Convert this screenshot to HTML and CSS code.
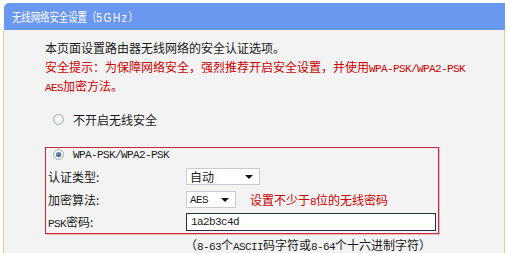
FILE: index.html
```html
<!DOCTYPE html>
<html lang="zh-CN">
<head>
<meta charset="utf-8">
<title>无线网络安全设置</title>
<link rel="stylesheet" href="styles.css">
</head>
<body>
<div class="wrap">
  <div class="head"><span class="head-text">无线网络安全设置（<span class="ghz">5GHz</span>）</span></div>
  <div class="panel">
    <div class="intro">
      <p>本页面设置路由器无线网络的安全认证选项。</p>
      <p class="red">安全提示：为保障网络安全，强烈推荐开启安全设置，并使用<span class="en">WPA-PSK/WPA2-PSK</span></p>
      <p class="red"><span class="en">AES</span>加密方法。</p>
    </div>
    <div class="radio-row off">
      <span class="radio"></span><span class="rlabel">不开启无线安全</span>
    </div>
    <div class="box">
      <div class="radio-row top">
        <span class="radio on"></span><span class="rlabel en">WPA-PSK/WPA2-PSK</span>
      </div>
      <div class="row r1">
        <span class="label">认证类型:</span>
        <span class="select s1"><span class="val">自动</span><span class="arrow"></span></span>
      </div>
      <div class="row r2">
        <span class="label">加密算法:</span>
        <span class="select s2"><span class="val en">AES</span><span class="arrow"></span></span>
        <span class="hint">设置不少于<span class="en">8</span>位的无线密码</span>
      </div>
      <div class="row r3">
        <span class="label"><span class="en">PSK</span>密码:</span>
        <span class="input"><span class="en">1a2b3c4d</span></span>
      </div>
    </div>
    <div class="note">（<span class="en">8-63</span>个<span class="en">ASCII</span>码字符或<span class="en">8-64</span>个十六进制字符）</div>
  </div>
</div>
</body>
</html>
```
FILE: styles.css
```css
html, body {
  margin: 0;
  padding: 0;
  background: #ffffff;
}
body {
  font-family: "Noto Sans CJK SC", "Noto Sans", sans-serif;
  font-size: 12px;
  color: #1a1a1a;
  width: 509px;
  height: 253px;
  overflow: hidden;
}
.en {
  font-family: "Liberation Mono", "DejaVu Sans Mono", monospace;
  font-size: 11px;
  letter-spacing: -0.6px;
}
.wrap {
  margin: 3px 4px 0 3px;
}
.head {
  height: 27px;
  background: #6a97f0;
  border-radius: 5px 0 0 0;
  color: #ffffff;
  display: flex;
  align-items: center;
  padding-left: 8px;
  margin-left: 1px;
}
.head-text {
  display: inline-block;
  font-size: 12px;
  transform: scaleX(0.78);
  transform-origin: left center;
  white-space: nowrap;
}
.ghz {
  font-family: "Liberation Sans", sans-serif;
  font-size: 13px;
  letter-spacing: 2px;
}
.panel {
  background: #f3f3f3;
  border-left: 1px solid #f6c987;
  border-right: 1px solid #f6c987;
  height: 223px;
  padding: 8px 0 0 41px;
  box-sizing: border-box;
}
.intro p {
  margin: 0;
  line-height: 19px;
  height: 19px;
  white-space: nowrap;
}
.red {
  color: #cc0000;
}
.radio-row {
  display: flex;
  align-items: center;
  height: 13px;
}
.radio-row.off {
  margin-top: 18px;
  margin-left: 8px;
}
.radio-row.top {
  margin-left: 7px;
}
.radio {
  width: 11px;
  height: 11px;
  border-radius: 50%;
  border: 1px solid #a9adb3;
  background: radial-gradient(circle at 50% 40%, #ffffff 0%, #eceff2 55%, #d5d9de 100%);
  box-sizing: border-box;
  flex: none;
  position: relative;
}
.radio.on::after {
  content: "";
  position: absolute;
  left: 2px;
  top: 2px;
  width: 5px;
  height: 5px;
  border-radius: 50%;
  background: radial-gradient(circle at 40% 35%, #7f9fc4 0%, #2c4f7d 70%, #1d3457 100%);
}
.rlabel {
  margin-left: 9px;
  white-space: nowrap;
}
.box {
  margin-top: 21px;
  width: 394px;
  height: 87px;
  border: 1px solid #c4283c;
  box-shadow: 1px 1px 0 #f2b8c2;
  box-sizing: border-box;
  margin-left: 0;
}
.row {
  display: flex;
  align-items: center;
  padding-left: 2px;
  white-space: nowrap;
}
.r1 { margin-top: 4px; height: 23px; }
.r2 { height: 23px; }
.r3 { height: 21px; }
.label {
  width: 138px;
  flex: none;
}
.select {
  height: 17px;
  background: #ffffff;
  border: 1px solid #c9cbcf;
  box-sizing: border-box;
  display: flex;
  align-items: center;
  justify-content: space-between;
  padding: 0 6px 0 3px;
}
.s1 { width: 74px; }
.s2 { width: 50px; }
.arrow {
  width: 0;
  height: 0;
  border-left: 4px solid transparent;
  border-right: 4px solid transparent;
  border-top: 4px solid #111111;
}
.hint {
  color: #cc0000;
  margin-left: 14px;
}
.input {
  width: 250px;
  height: 18px;
  background: #ffffff;
  border: 1px solid #243247;
  box-sizing: border-box;
  display: flex;
  align-items: center;
  padding-left: 4px;
}
.note {
  margin-top: 5px;
  margin-left: 140px;
  line-height: 12px;
  height: 12px;
  white-space: nowrap;
}
```
